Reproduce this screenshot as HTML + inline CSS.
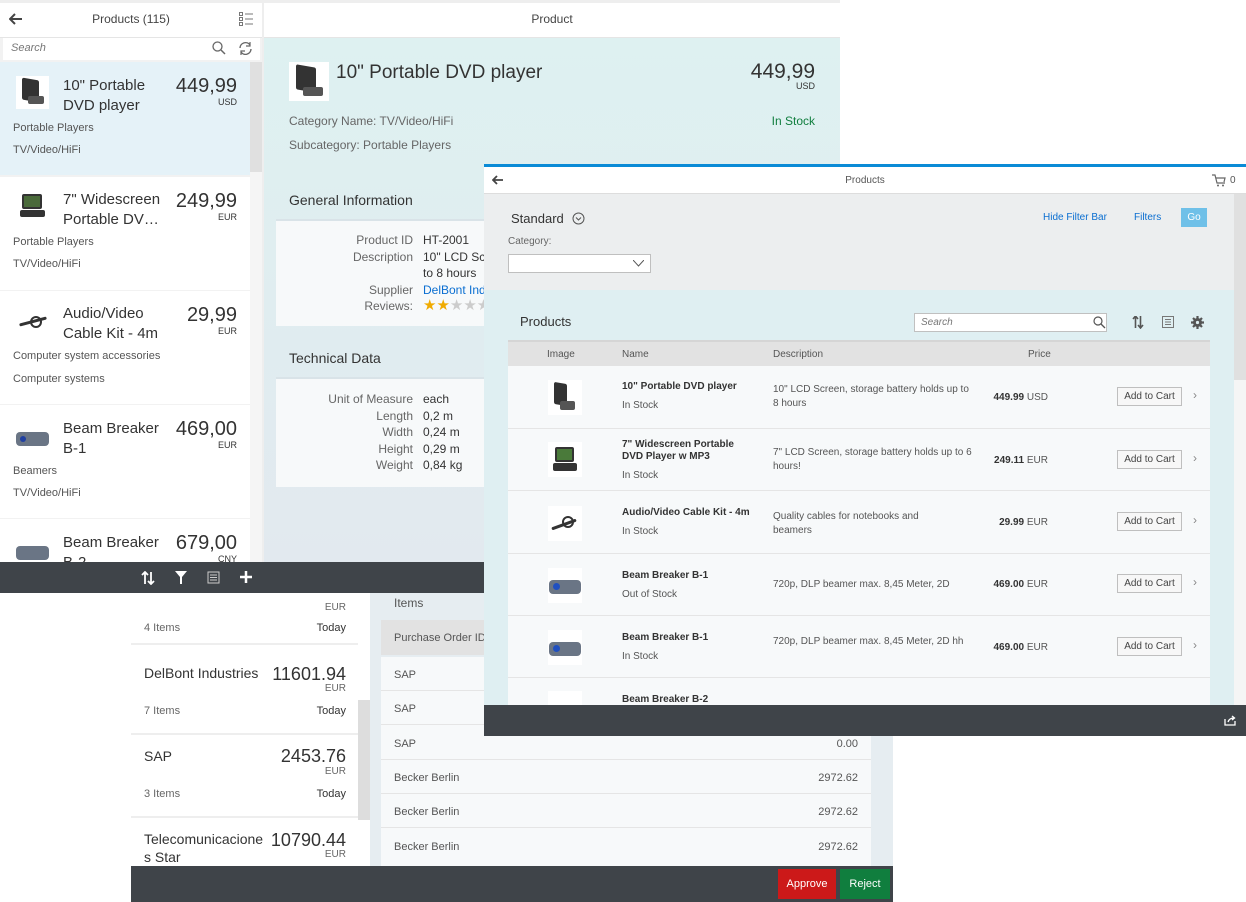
<!DOCTYPE html>
<html><head><meta charset="utf-8"><style>
*{margin:0;padding:0;box-sizing:border-box}
body{width:1246px;height:902px;position:relative;overflow:hidden;background:#fff;font-family:"Liberation Sans",Arial,sans-serif;color:#333}
.a{position:absolute}
.img{position:absolute;background:#fff}
.dvd{position:absolute;background:#333;border-radius:2px}
.r{text-align:right}
</style></head><body>

<!-- Bottom layer -->
<div class="a" style="left:131px;top:590px;width:762px;height:312px;background:#fff">
  <div class="a" style="left:0;top:0;width:227px;height:276px;background:#fff">
    <div class="a r" style="left:130px;top:12px;width:85px;font-size:10px;color:#666">EUR</div>
    <div class="a" style="left:13px;top:32px;font-size:11px;color:#666">4 Items</div>
    <div class="a r" style="left:150px;top:32px;width:65px;font-size:11px">Today</div>
    <div class="a" style="left:0;top:53px;width:227px;height:2px;background:#eee"></div>
    <div class="a" style="left:13px;top:75px;font-size:14px">DelBont Industries</div>
    <div class="a r" style="left:130px;top:74px;width:85px;font-size:18px">11601.94</div>
    <div class="a r" style="left:130px;top:93px;width:85px;font-size:10px;color:#666">EUR</div>
    <div class="a" style="left:13px;top:115px;font-size:11px;color:#666">7 Items</div>
    <div class="a r" style="left:150px;top:115px;width:65px;font-size:11px">Today</div>
    <div class="a" style="left:0;top:143px;width:227px;height:2px;background:#eee"></div>
    <div class="a" style="left:13px;top:158px;font-size:14px">SAP</div>
    <div class="a r" style="left:130px;top:156px;width:85px;font-size:18px">2453.76</div>
    <div class="a r" style="left:130px;top:176px;width:85px;font-size:10px;color:#666">EUR</div>
    <div class="a" style="left:13px;top:198px;font-size:11px;color:#666">3 Items</div>
    <div class="a r" style="left:150px;top:198px;width:65px;font-size:11px">Today</div>
    <div class="a" style="left:0;top:226px;width:227px;height:2px;background:#eee"></div>
    <div class="a" style="left:13px;top:240px;font-size:14px;width:120px;line-height:18px">Telecomunicacione s Star</div>
    <div class="a r" style="left:130px;top:240px;width:85px;font-size:18px">10790.44</div>
    <div class="a r" style="left:130px;top:259px;width:85px;font-size:10px;color:#666">EUR</div>
  </div>
  <div class="a" style="left:227px;top:110px;width:12px;height:120px;background:#ddd"></div>
  <div class="a" style="left:239px;top:0;width:523px;height:276px;background:#e6edf1">
    <div class="a" style="left:24px;top:6px;font-size:12px;color:#555">Items</div>
    <div class="a" style="left:11px;top:30px;width:490px;height:35px;background:#e2e2e2"><span class="a" style="left:13px;top:12px;font-size:11px;color:#555">Purchase Order ID</span></div>
    <div class="a" style="left:11px;top:67px;width:490px;height:209px;background:#f7f9fa">
      <div class="a" style="left:13px;top:12px;font-size:11px;color:#555">SAP</div>
      <div class="a" style="left:0;top:33px;width:490px;height:1px;background:#e5e5e5"></div>
      <div class="a" style="left:13px;top:46px;font-size:11px;color:#555">SAP</div>
      <div class="a" style="left:0;top:67px;width:490px;height:1px;background:#e5e5e5"></div>
      <div class="a" style="left:13px;top:81px;font-size:11px;color:#555">SAP</div><div class="a r" style="left:380px;top:81px;width:97px;font-size:11px;color:#555">0.00</div>
      <div class="a" style="left:0;top:102px;width:490px;height:1px;background:#e5e5e5"></div>
      <div class="a" style="left:13px;top:115px;font-size:11px;color:#555">Becker Berlin</div><div class="a r" style="left:380px;top:115px;width:97px;font-size:11px;color:#555">2972.62</div>
      <div class="a" style="left:0;top:136px;width:490px;height:1px;background:#e5e5e5"></div>
      <div class="a" style="left:13px;top:149px;font-size:11px;color:#555">Becker Berlin</div><div class="a r" style="left:380px;top:149px;width:97px;font-size:11px;color:#555">2972.62</div>
      <div class="a" style="left:0;top:170px;width:490px;height:1px;background:#e5e5e5"></div>
      <div class="a" style="left:13px;top:184px;font-size:11px;color:#555">Becker Berlin</div><div class="a r" style="left:380px;top:184px;width:97px;font-size:11px;color:#555">2972.62</div>
    </div>
  </div>
  <div class="a" style="left:0;top:276px;width:762px;height:36px;background:#3f4449">
    <div class="a" style="left:647px;top:3px;width:58px;height:30px;background:#cc1919;color:#fff;font-size:11px;text-align:center;line-height:30px">Approve</div>
    <div class="a" style="left:709px;top:3px;width:50px;height:30px;background:#107e3e;color:#fff;font-size:11px;text-align:center;line-height:30px">Reject</div>
  </div>
</div>

<!-- Top-left layer -->
<div class="a" style="left:0;top:0;width:840px;height:562px;background:#fff">
  <div class="a" style="left:0;top:0;width:840px;height:3px;background:#eee"></div>
  <div class="a" style="left:0;top:3px;width:262px;height:35px;background:#fff;border-bottom:1px solid #e5e5e5">
    <svg class="a" style="left:9px;top:10px" width="14" height="12"><path d="M13 6H2M6 1L1 6l5 5" fill="none" stroke="#444" stroke-width="2"/></svg>
    <div class="a" style="left:0;top:9px;width:262px;text-align:center;font-size:12px;color:#444">Products (115)</div>
    <svg class="a" style="left:239px;top:9px" width="14" height="14"><g fill="none" stroke="#777"><rect x="0.5" y="0.5" width="3" height="3"/><rect x="0.5" y="5.5" width="3" height="3"/><rect x="0.5" y="10.5" width="3" height="3"/><path d="M6 2h8M6 7h8M6 12h8"/></g></svg>
  </div>
  <div class="a" style="left:0;top:38px;width:262px;height:24px;background:#f2f2f2">
    <div class="a" style="left:3px;top:0;width:257px;height:22px;background:#fff"></div>
    <div class="a" style="left:11px;top:4px;font-size:11px;font-style:italic;color:#777">Search</div>
    <svg class="a" style="left:212px;top:3px" width="14" height="14"><circle cx="5.5" cy="5.5" r="4.5" fill="none" stroke="#666" stroke-width="1.3"/><path d="M9 9l4 4" stroke="#666" stroke-width="1.5"/></svg>
    <svg class="a" style="left:238px;top:3px" width="15" height="15"><path d="M2 7A5.5 5.5 0 0 1 12 4M13 8A5.5 5.5 0 0 1 3 11" fill="none" stroke="#666" stroke-width="1.4"/><path d="M12 1v4h-4M3 14v-4h4" fill="none" stroke="#666" stroke-width="1.2"/></svg>
  </div>
  <div class="a" style="left:0;top:62px;width:250px;height:500px;background:#f2f2f2">
    <div class="a" style="left:0;top:0;width:250px;height:113px;background:#e5f2f8"></div>
    <div class="a" style="left:0;top:115px;width:250px;height:113px;background:#fff"></div>
    <div class="a" style="left:0;top:229px;width:250px;height:113px;background:#fff"></div>
    <div class="a" style="left:0;top:343px;width:250px;height:113px;background:#fff"></div>
    <div class="a" style="left:0;top:457px;width:250px;height:43px;background:#fff"></div>
  </div>
  <div class="a" style="left:250px;top:62px;width:12px;height:110px;background:#e0e0e0"></div>
  <div class="a" style="left:250px;top:172px;width:12px;height:390px;background:#f5f5f5"></div>
  <div class="a" style="left:262px;top:0;width:2px;height:562px;background:#eee"></div>

  <div class="img" style="left:16px;top:76px;width:33px;height:33px"><div class="dvd" style="left:6px;top:3px;width:17px;height:22px;transform:skewY(10deg)"></div><div class="dvd" style="left:12px;top:20px;width:16px;height:8px;background:#555"></div></div>
  <div class="a" style="left:63px;top:76px;font-size:15px;line-height:20px;color:#333">10" Portable<br>DVD player</div>
  <div class="a r" style="left:160px;top:75px;width:77px;font-size:20px">449,99</div>
  <div class="a r" style="left:160px;top:97px;width:77px;font-size:9px">USD</div>
  <div class="a" style="left:13px;top:122px;font-size:11px;color:#555">Portable Players</div>
  <div class="a" style="left:13px;top:144px;font-size:11px;color:#555">TV/Video/HiFi</div>

  <div class="img" style="left:16px;top:192px;width:33px;height:30px"><div class="dvd" style="left:6px;top:2px;width:20px;height:15px;background:#4a6a3a;border:2px solid #333"></div><div class="dvd" style="left:4px;top:18px;width:25px;height:7px"></div></div>
  <div class="a" style="left:63px;top:190px;font-size:15px;line-height:20px">7" Widescreen<br>Portable DV…</div>
  <div class="a r" style="left:160px;top:190px;width:77px;font-size:20px">249,99</div>
  <div class="a r" style="left:160px;top:212px;width:77px;font-size:9px">EUR</div>
  <div class="a" style="left:13px;top:236px;font-size:11px;color:#555">Portable Players</div>
  <div class="a" style="left:13px;top:258px;font-size:11px;color:#555">TV/Video/HiFi</div>

  <div class="img" style="left:16px;top:308px;width:33px;height:28px"><div class="dvd" style="left:3px;top:12px;width:28px;height:3px;transform:rotate(-15deg)"></div><div class="dvd" style="left:14px;top:8px;width:12px;height:12px;border-radius:50%;background:none;border:2px solid #333"></div></div>
  <div class="a" style="left:63px;top:304px;font-size:15px;line-height:20px">Audio/Video<br>Cable Kit - 4m</div>
  <div class="a r" style="left:160px;top:304px;width:77px;font-size:20px">29,99</div>
  <div class="a r" style="left:160px;top:326px;width:77px;font-size:9px">EUR</div>
  <div class="a" style="left:13px;top:350px;font-size:11px;color:#555">Computer system accessories</div>
  <div class="a" style="left:13px;top:373px;font-size:11px;color:#555">Computer systems</div>

  <div class="img" style="left:14px;top:426px;width:37px;height:25px"><div class="dvd" style="left:2px;top:6px;width:33px;height:14px;background:#6a7585;border-radius:4px"></div><div class="dvd" style="left:6px;top:10px;width:6px;height:6px;border-radius:50%;background:#2040a0"></div></div>
  <div class="a" style="left:63px;top:419px;font-size:15px;line-height:20px">Beam Breaker<br>B-1</div>
  <div class="a r" style="left:160px;top:418px;width:77px;font-size:20px">469,00</div>
  <div class="a r" style="left:160px;top:440px;width:77px;font-size:9px">EUR</div>
  <div class="a" style="left:13px;top:465px;font-size:11px;color:#555">Beamers</div>
  <div class="a" style="left:13px;top:487px;font-size:11px;color:#555">TV/Video/HiFi</div>

  <div class="img" style="left:14px;top:540px;width:37px;height:22px"><div class="dvd" style="left:2px;top:6px;width:33px;height:14px;background:#6a7585;border-radius:4px"></div></div>
  <div class="a" style="left:63px;top:533px;font-size:15px;line-height:20px">Beam Breaker<br>B-2</div>
  <div class="a r" style="left:160px;top:532px;width:77px;font-size:20px">679,00</div>
  <div class="a r" style="left:160px;top:554px;width:77px;font-size:9px">CNY</div>

  <div class="a" style="left:264px;top:3px;width:576px;height:35px;background:#fff;border-bottom:1px solid #e5e5e5"><div class="a" style="left:0;top:9px;width:576px;text-align:center;font-size:12px;color:#444">Product</div></div>
  <div class="a" style="left:264px;top:38px;width:576px;height:524px;background:linear-gradient(#def1f1,#e2e9ef)"></div>
  <div class="img" style="left:289px;top:62px;width:40px;height:39px"><div class="dvd" style="left:7px;top:4px;width:20px;height:25px;transform:skewY(10deg)"></div><div class="dvd" style="left:14px;top:25px;width:20px;height:9px;background:#555"></div></div>
  <div class="a" style="left:336px;top:62px;font-size:19px;color:#333">10" Portable DVD player</div>
  <div class="a r" style="left:700px;top:60px;width:115px;font-size:21px">449,99</div>
  <div class="a r" style="left:700px;top:81px;width:115px;font-size:9px">USD</div>
  <div class="a" style="left:289px;top:114px;font-size:12px;color:#666">Category Name: TV/Video/HiFi</div>
  <div class="a" style="left:289px;top:138px;font-size:12px;color:#666">Subcategory: Portable Players</div>
  <div class="a r" style="left:700px;top:114px;width:115px;font-size:12px;color:#107e3e">In Stock</div>
  <div class="a" style="left:289px;top:192px;font-size:14px;color:#333">General Information</div>
  <div class="a" style="left:276px;top:219px;width:564px;height:2px;background:#d9e3e8"></div>
  <div class="a" style="left:276px;top:221px;width:564px;height:105px;background:#f7f9fa"></div>
  <div class="a r" style="left:300px;top:232px;width:113px;font-size:12px;color:#666;line-height:16.5px">Product ID<br>Description<br><br>Supplier<br>Reviews:</div>
  <div class="a" style="left:423px;top:232px;font-size:12px;line-height:16.5px;color:#333">HT-2001<br>10" LCD Screen<br>to 8 hours<br><span style="color:#0a6ed1">DelBont Industries</span><br><span style="color:#f0ab00;font-size:15px">★★</span><span style="color:#ccc;font-size:15px">★★★</span></div>
  <div class="a" style="left:289px;top:350px;font-size:14px">Technical Data</div>
  <div class="a" style="left:276px;top:377px;width:564px;height:2px;background:#d9e3e8"></div>
  <div class="a" style="left:276px;top:379px;width:564px;height:108px;background:#f7f9fa"></div>
  <div class="a r" style="left:300px;top:391px;width:113px;font-size:12px;color:#666;line-height:16.5px">Unit of Measure<br>Length<br>Width<br>Height<br>Weight</div>
  <div class="a" style="left:423px;top:391px;font-size:12px;line-height:16.5px">each<br>0,2 m<br>0,24 m<br>0,29 m<br>0,84 kg</div>
</div>
<div class="a" style="left:0;top:562px;width:484px;height:31px;background:#3f4449">
  <svg class="a" style="left:141px;top:9px" width="14" height="14"><path d="M4 1v12M1 4l3-3 3 3M10 13V1M7 10l3 3 3-3" fill="none" stroke="#fff" stroke-width="1.8"/></svg>
  <svg class="a" style="left:175px;top:9px" width="12" height="13"><path d="M0 0h12L7 6v7H5V6z" fill="#fff"/></svg>
  <svg class="a" style="left:207px;top:9px" width="13" height="13"><rect x="1" y="1" width="11" height="11" fill="none" stroke="#ccc"/><path d="M3 4h7M3 6.5h7M3 9h7" stroke="#ccc"/></svg>
  <svg class="a" style="left:240px;top:9px" width="12" height="12"><path d="M6 0v12M0 6h12" stroke="#fff" stroke-width="2.5"/></svg>
</div>

<!-- Right layer -->
<div class="a" style="left:484px;top:164px;width:762px;height:572px;background:#dfeff2">
  <div class="a" style="left:0;top:0;width:762px;height:3px;background:#0a8bd6"></div>
  <div class="a" style="left:0;top:3px;width:762px;height:27px;background:#fff;border-bottom:1px solid #ddd">
    <svg class="a" style="left:8px;top:8px" width="12" height="10"><path d="M11 5H2M5 1L1 5l4 4" fill="none" stroke="#444" stroke-width="1.8"/></svg>
    <div class="a" style="left:0;top:8px;width:762px;text-align:center;font-size:10px;color:#555">Products</div>
    <svg class="a" style="left:728px;top:7px" width="14" height="13"><path d="M0 1h3l2 8h8M4 4h9l-1 4" fill="none" stroke="#666" stroke-width="1.2"/><circle cx="6" cy="11.5" r="1" fill="#666"/><circle cx="11" cy="11.5" r="1" fill="#666"/></svg>
    <div class="a" style="left:746px;top:8px;font-size:10px;color:#555">0</div>
  </div>
  <div class="a" style="left:0;top:30px;width:750px;height:96px;background:#eceeef">
    <div class="a" style="left:27px;top:17px;font-size:13px;color:#333">Standard</div>
    <svg class="a" style="left:88px;top:18px" width="13" height="13"><circle cx="6.5" cy="6.5" r="5.5" fill="none" stroke="#555"/><path d="M4 5.5l2.5 2.5 2.5-2.5" fill="none" stroke="#555"/></svg>
    <div class="a" style="left:24px;top:42px;font-size:10px;color:#666">Category:</div>
    <div class="a" style="left:24px;top:60px;width:143px;height:19px;background:#fff;border:1px solid #bfbfbf"><svg class="a" style="left:124px;top:5px" width="11" height="7"><path d="M0 0l5.5 6 5.5-6" fill="none" stroke="#555"/></svg></div>
    <div class="a" style="left:559px;top:18px;font-size:10px;color:#0a6ed1">Hide Filter Bar</div>
    <div class="a" style="left:650px;top:18px;font-size:10px;color:#0a6ed1">Filters</div>
    <div class="a" style="left:697px;top:14px;width:26px;height:19px;background:#6fc0e8;color:#fff;font-size:10px;text-align:center;line-height:19px">Go</div>
  </div>
  <div class="a" style="left:750px;top:30px;width:12px;height:186px;background:#e0e0e0"></div>
  <div class="a" style="left:750px;top:216px;width:12px;height:326px;background:#f5f5f5"></div>
  <div class="a" style="left:36px;top:150px;font-size:13px;color:#333">Products</div>
  <div class="a" style="left:430px;top:149px;width:193px;height:19px;background:#fff;border:1px solid #c0c0c0">
    <div class="a" style="left:6px;top:3px;font-size:10px;font-style:italic;color:#777">Search</div>
    <svg class="a" style="left:178px;top:2px" width="13" height="13"><circle cx="5" cy="5" r="4" fill="none" stroke="#555" stroke-width="1.2"/><path d="M8 8l4 4" stroke="#555" stroke-width="1.3"/></svg>
  </div>
  <svg class="a" style="left:648px;top:152px" width="12" height="13"><path d="M3.5 0v12M1 3l2.5-3 2.5 3M8.5 12V0M6 9l2.5 3 2.5-3" fill="none" stroke="#555" stroke-width="1.6"/></svg>
  <svg class="a" style="left:678px;top:152px" width="12" height="12"><rect x="0.5" y="0.5" width="11" height="11" fill="none" stroke="#777"/><path d="M3 3.5h6M3 6h6M3 8.5h6" stroke="#777"/></svg>
  <svg class="a" style="left:707px;top:152px" width="13" height="13"><circle cx="6.5" cy="6.5" r="4.5" fill="#555"/><path d="M6.5 0v13M0 6.5h13M2 2l9 9M11 2l-9 9" stroke="#555" stroke-width="2.2"/><circle cx="6.5" cy="6.5" r="1.6" fill="#dfeff2"/></svg>
  <div class="a" style="left:24px;top:176px;width:702px;height:26px;background:#e2e2e2;border-top:2px solid #d5d5d5;font-size:10px;color:#555">
    <span class="a" style="left:39px;top:7px">Image</span><span class="a" style="left:114px;top:7px">Name</span><span class="a" style="left:265px;top:7px">Description</span><span class="a" style="left:520px;top:7px">Price</span>
  </div>
  <div class="a" style="left:24px;top:202px;width:702px;height:339px;background:#f7f9fa;font-size:10px;color:#333">
    <div class="a" style="left:0;top:62px;width:702px;height:1px;background:#e5e5e5"></div>
    <div class="a" style="left:0;top:124px;width:702px;height:1px;background:#e5e5e5"></div>
    <div class="a" style="left:0;top:187px;width:702px;height:1px;background:#e5e5e5"></div>
    <div class="a" style="left:0;top:249px;width:702px;height:1px;background:#e5e5e5"></div>
    <div class="a" style="left:0;top:311px;width:702px;height:1px;background:#e5e5e5"></div>

    <div class="img" style="left:40px;top:14px;width:34px;height:35px"><div class="dvd" style="left:6px;top:3px;width:13px;height:22px;transform:skewY(10deg)"></div><div class="dvd" style="left:12px;top:21px;width:15px;height:9px;background:#555"></div></div>
    <div class="a" style="left:114px;top:15px;font-weight:bold">10" Portable DVD player</div>
    <div class="a" style="left:114px;top:34px;color:#555">In Stock</div>
    <div class="a" style="left:265px;top:17px;width:200px;line-height:14px;color:#555">10" LCD Screen, storage battery holds up to 8 hours</div>

    <div class="img" style="left:40px;top:76px;width:34px;height:35px"><div class="dvd" style="left:7px;top:5px;width:19px;height:15px;background:#4a7a3a;border:2px solid #333"></div><div class="dvd" style="left:5px;top:21px;width:24px;height:8px"></div></div>
    <div class="a" style="left:114px;top:73px;font-weight:bold;line-height:12px">7" Widescreen Portable<br>DVD Player w MP3</div>
    <div class="a" style="left:114px;top:104px;color:#555">In Stock</div>
    <div class="a" style="left:265px;top:80px;width:200px;line-height:14px;color:#555">7" LCD Screen, storage battery holds up to 6 hours!</div>

    <div class="img" style="left:40px;top:140px;width:34px;height:35px"><div class="dvd" style="left:3px;top:17px;width:26px;height:3px;transform:rotate(-20deg)"></div><div class="dvd" style="left:14px;top:10px;width:12px;height:12px;border-radius:50%;background:none;border:2px solid #333"></div></div>
    <div class="a" style="left:114px;top:141px;font-weight:bold">Audio/Video Cable Kit - 4m</div>
    <div class="a" style="left:114px;top:160px;color:#555">In Stock</div>
    <div class="a" style="left:265px;top:144px;width:170px;line-height:14px;color:#555">Quality cables for notebooks and beamers</div>

    <div class="img" style="left:40px;top:202px;width:34px;height:35px"><div class="dvd" style="left:1px;top:12px;width:32px;height:14px;background:#6a7585;border-radius:4px"></div><div class="dvd" style="left:5px;top:15px;width:7px;height:7px;border-radius:50%;background:#2050c0"></div></div>
    <div class="a" style="left:114px;top:204px;font-weight:bold">Beam Breaker B-1</div>
    <div class="a" style="left:114px;top:223px;color:#555">Out of Stock</div>
    <div class="a" style="left:265px;top:213px;color:#555">720p, DLP beamer max. 8,45 Meter, 2D</div>

    <div class="img" style="left:40px;top:264px;width:34px;height:35px"><div class="dvd" style="left:1px;top:12px;width:32px;height:14px;background:#6a7585;border-radius:4px"></div><div class="dvd" style="left:5px;top:15px;width:7px;height:7px;border-radius:50%;background:#2050c0"></div></div>
    <div class="a" style="left:114px;top:266px;font-weight:bold">Beam Breaker B-1</div>
    <div class="a" style="left:114px;top:285px;color:#555">In Stock</div>
    <div class="a" style="left:265px;top:269px;width:195px;line-height:14px;color:#555">720p, DLP beamer max. 8,45 Meter, 2D hh</div>

    <div class="img" style="left:40px;top:325px;width:34px;height:14px"></div>
    <div class="a" style="left:114px;top:328px;font-weight:bold">Beam Breaker B-2</div>

    <div class="a r" style="left:420px;top:26px;width:120px"><b>449.99</b> <span style="color:#555">USD</span></div>
    <div class="a r" style="left:420px;top:89px;width:120px"><b>249.11</b> <span style="color:#555">EUR</span></div>
    <div class="a r" style="left:420px;top:151px;width:120px"><b>29.99</b> <span style="color:#555">EUR</span></div>
    <div class="a r" style="left:420px;top:213px;width:120px"><b>469.00</b> <span style="color:#555">EUR</span></div>
    <div class="a r" style="left:420px;top:276px;width:120px"><b>469.00</b> <span style="color:#555">EUR</span></div>

    <div class="a" style="left:609px;top:21px;width:65px;height:19px;border:1px solid #bfbfbf;background:#f7f7f7;text-align:center;line-height:17px;color:#444">Add to Cart</div>
    <div class="a" style="left:609px;top:84px;width:65px;height:19px;border:1px solid #bfbfbf;background:#f7f7f7;text-align:center;line-height:17px;color:#444">Add to Cart</div>
    <div class="a" style="left:609px;top:146px;width:65px;height:19px;border:1px solid #bfbfbf;background:#f7f7f7;text-align:center;line-height:17px;color:#444">Add to Cart</div>
    <div class="a" style="left:609px;top:208px;width:65px;height:19px;border:1px solid #bfbfbf;background:#f7f7f7;text-align:center;line-height:17px;color:#444">Add to Cart</div>
    <div class="a" style="left:609px;top:271px;width:65px;height:19px;border:1px solid #bfbfbf;background:#f7f7f7;text-align:center;line-height:17px;color:#444">Add to Cart</div>
    <div class="a" style="left:685px;top:22px;color:#888;font-size:12px">›</div>
    <div class="a" style="left:685px;top:85px;color:#888;font-size:12px">›</div>
    <div class="a" style="left:685px;top:147px;color:#888;font-size:12px">›</div>
    <div class="a" style="left:685px;top:209px;color:#888;font-size:12px">›</div>
    <div class="a" style="left:685px;top:272px;color:#888;font-size:12px">›</div>
  </div>
  <div class="a" style="left:0;top:541px;width:762px;height:31px;background:#3f4449">
    <svg class="a" style="left:740px;top:10px" width="12" height="11"><path d="M1 4v6h10V6" fill="none" stroke="#fff" stroke-width="1.3"/><path d="M4 7c1-3 3-4 6-4M8 1l2.5 2L8 5" fill="none" stroke="#fff" stroke-width="1.3"/></svg>
  </div>
</div>
</body></html>
